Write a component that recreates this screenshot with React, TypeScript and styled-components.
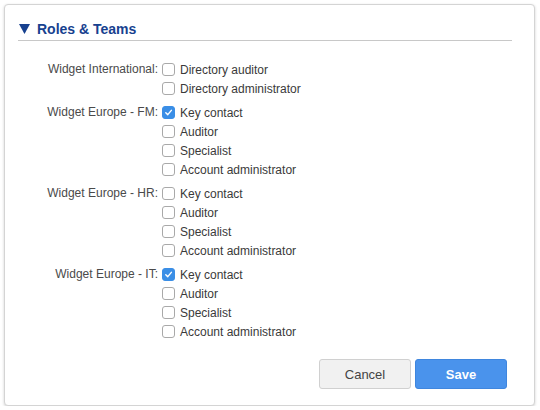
import styled, { createGlobalStyle } from 'styled-components';

const GlobalStyle = createGlobalStyle`
  html, body {
    margin: 0;
    padding: 0;
    background: #ffffff;
    font-family: "Liberation Sans", Arial, Helvetica, sans-serif;
  }
`;

type Group = {
  team: string;
  roles: { name: string; checked?: boolean }[];
};

const groups: Group[] = [
  {
    team: 'Widget International:',
    roles: [{ name: 'Directory auditor' }, { name: 'Directory administrator' }],
  },
  {
    team: 'Widget Europe - FM:',
    roles: [
      { name: 'Key contact', checked: true },
      { name: 'Auditor' },
      { name: 'Specialist' },
      { name: 'Account administrator' },
    ],
  },
  {
    team: 'Widget Europe - HR:',
    roles: [
      { name: 'Key contact' },
      { name: 'Auditor' },
      { name: 'Specialist' },
      { name: 'Account administrator' },
    ],
  },
  {
    team: 'Widget Europe - IT:',
    roles: [
      { name: 'Key contact', checked: true },
      { name: 'Auditor' },
      { name: 'Specialist' },
      { name: 'Account administrator' },
    ],
  },
];

function Checkbox({ checked }: { checked?: boolean }) {
  return (
    <Box $checked={checked}>
      {checked && (
        <svg width="9" height="9" viewBox="0 0 10 10">
          <path d="M2 5.2 L4.2 7.4 L8.2 2.6" fill="none" stroke="#fff" strokeWidth="1.6" strokeLinecap="round" strokeLinejoin="round" />
        </svg>
      )}
    </Box>
  );
}

export default function App() {
  return (
    <>
      <GlobalStyle />
      <Panel>
        <Heading>
          <Arrow width="11" height="10" viewBox="0 0 11 10">
            <path d="M0 0 H11 L5.5 10 Z" fill="currentColor" />
          </Arrow>
          Roles &amp; Teams
        </Heading>
        <Groups>
          {groups.map((g) => (
            <TeamGroup key={g.team}>
              <TeamLabel>{g.team}</TeamLabel>
              <RoleList>
                {g.roles.map((r) => (
                  <Role key={r.name}>
                    <Checkbox checked={r.checked} />
                    <span>{r.name}</span>
                  </Role>
                ))}
              </RoleList>
            </TeamGroup>
          ))}
        </Groups>
        <Actions>
          <Button>Cancel</Button>
          <Button $primary>Save</Button>
        </Actions>
      </Panel>
    </>
  );
}

const Panel = styled.div`
  box-sizing: border-box;
  margin: 4px 0 0 4px;
  width: 531px;
  height: 402px;
  padding: 14px 22px 0 13px;
  background: #fff;
  border: 1px solid #d4d4d4;
  border-radius: 4px;
  box-shadow: 0 1px 3px rgba(0, 0, 0, 0.18);
`;

const Heading = styled.h2`
  display: flex;
  align-items: center;
  gap: 7px;
  margin: 0;
  padding: 0 0 1px 1px;
  border-bottom: 1px solid #c8c8c8;
  font-size: 14px;
  font-weight: bold;
  line-height: 20px;
  color: #17418f;
`;

const Arrow = styled.svg`
  flex: none;
`;

const Groups = styled.div`
  display: flex;
  flex-direction: column;
  gap: 5px;
  padding-top: 19px;
`;

const TeamGroup = styled.div`
  display: grid;
  grid-template-columns: 140px 1fr;
  column-gap: 4px;
  align-items: start;
`;

const TeamLabel = styled.div`
  text-align: right;
  font-size: 12px;
  line-height: 19px;
  color: #4a4a4a;
`;

const RoleList = styled.div`
  display: flex;
  flex-direction: column;
`;

const Role = styled.label`
  display: flex;
  align-items: center;
  gap: 5px;
  height: 19px;
  font-size: 12px;
  color: #3a3a3a;
`;

const Box = styled.span<{ $checked?: boolean }>`
  box-sizing: border-box;
  display: inline-flex;
  align-items: center;
  justify-content: center;
  width: 13px;
  height: 13px;
  border-radius: 3px;
  border: 1px solid ${({ $checked }) => ($checked ? '#3a8ee6' : '#a9a9a9')};
  background: ${({ $checked }) => ($checked ? '#3a8ee6' : '#fff')};
`;

const Actions = styled.div`
  display: flex;
  justify-content: flex-end;
  gap: 4px;
  margin-top: 18px;
  padding-right: 5px;
`;

const Button = styled.button<{ $primary?: boolean }>`
  box-sizing: border-box;
  width: 92px;
  height: 30px;
  border-radius: 3px;
  font-family: "Liberation Sans", Arial, sans-serif;
  font-size: 13px;
  font-weight: ${({ $primary }) => ($primary ? 'bold' : 'normal')};
  color: ${({ $primary }) => ($primary ? '#fff' : '#444')};
  background: ${({ $primary }) => ($primary ? '#4a93ec' : '#f1f1f1')};
  border: 1px solid ${({ $primary }) => ($primary ? '#3f86de' : '#d0d0d0')};
`;
